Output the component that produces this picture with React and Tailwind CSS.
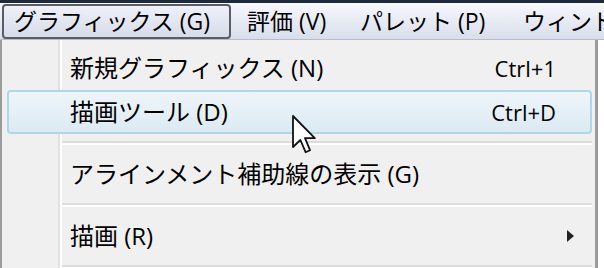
import React from 'react';

const font = { fontFamily: '"Open Sans", "Noto Sans CJK JP", sans-serif' };

const MenuItem = ({ label, shortcut, submenu, active }) => {
  return (
    <div className="relative h-[44px] flex items-center">
      {active && (
        <div className="absolute left-[5px] right-[3px] top-0 bottom-0 rounded-[4px] border-2 border-[#aed8ea] bg-gradient-to-b from-[#eef5f9] to-[#dbeaf3]" />
      )}
      <span className="relative pl-[68px] text-[24px] leading-none text-black whitespace-nowrap">{label}</span>
      <span className="flex-1" />
      {shortcut && (
        <span className="relative pr-[39px] text-[22px] leading-none text-black whitespace-nowrap">{shortcut}</span>
      )}
      {submenu && (
        <span className="relative mr-[21px] w-0 h-0 border-y-[6px] border-y-transparent border-l-[7px] border-l-[#222]" />
      )}
    </div>
  );
};

const Separator = () => (
  <div className="h-[18px] pl-[60px] pr-[3px] pt-[7px]">
    <div className="h-[2px] bg-[#dcdcdc]" />
    <div className="h-[2px] bg-white" />
  </div>
);

const Cursor = () => (
  <svg className="absolute left-[292px] top-[115px]" width="26" height="40" viewBox="0 0 13 20">
    <path
      d="M0.5 0.5 L0.5 16 L4.2 12.5 L6.8 18.6 L9 17.6 L6.5 11.6 L11.4 11.6 Z"
      fill="#fff"
      stroke="#111"
      strokeWidth="0.9"
      strokeLinejoin="round"
    />
  </svg>
);

export default function App() {
  return (
    <div className="relative w-[604px] h-[268px] overflow-hidden bg-white" style={font}>
      <div className="h-[3px] bg-[#1c2a3b]" />
      <div className="h-[37px] flex items-center bg-gradient-to-b from-[#f6f8fc] via-[#e7ebf4] to-[#d8deea] border-b border-[#b9bcc4] text-[23px] leading-none text-black whitespace-nowrap overflow-hidden">
        <div className="shrink-0 ml-[2px] w-[229px] h-[35px] mt-[1px] flex items-center pl-[10px] rounded-[4px] border-2 border-[#5a5d63] bg-gradient-to-b from-[#eef1f8] to-[#d7dcea]">
          グラフィックス (G)
        </div>
        <div className="shrink-0 w-[118px] pl-[16px]">評価 (V)</div>
        <div className="shrink-0 w-[163px] pl-[11px]">パレット (P)</div>
        <div className="shrink-0 pl-[11px]">ウィンドウ</div>
      </div>
      <div className="relative w-[598px] h-[228px] bg-[#f0f0f0] border-l-2 border-r-[3px] border-[#9b9b9b] pt-[6px]">
        <div className="absolute left-[56px] top-0 bottom-0 w-[2px] bg-[#e0e0e0]" />
        <div className="absolute left-[58px] top-0 bottom-0 w-[2px] bg-white" />
        <MenuItem label="新規グラフィックス (N)" shortcut="Ctrl+1" />
        <MenuItem label="描画ツール (D)" shortcut="Ctrl+D" active />
        <Separator />
        <MenuItem label="アラインメント補助線の表示 (G)" />
        <Separator />
        <MenuItem label="描画 (R)" submenu />
        <Separator />
      </div>
      <Cursor />
    </div>
  );
}
